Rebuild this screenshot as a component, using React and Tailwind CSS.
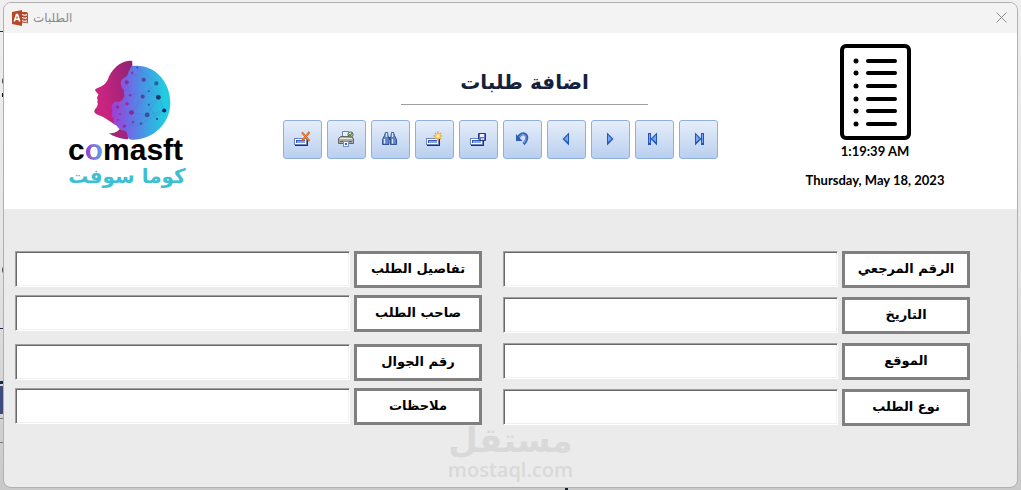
import * as React from "react";

const arabic = "font-['DejaVu_Sans',sans-serif]";

const leftFields = [
  [
    { id: "details", label: "تفاصيل الطلب" },
    { id: "owner", label: "صاحب الطلب" },
  ],
  [
    { id: "mobile", label: "رقم الجوال" },
    { id: "notes", label: "ملاحظات" },
  ],
];

const rightFields = [
  { id: "reference", label: "الرقم المرجعي" },
  { id: "date", label: "التاريخ" },
  { id: "location", label: "الموقع" },
  { id: "type", label: "نوع الطلب" },
];

function Icon({ children }) {
  return (
    <svg viewBox="0 0 16 16" className="size-4" aria-hidden="true">
      {children}
    </svg>
  );
}

function RecordBox() {
  return (
    <g shapeRendering="crispEdges">
      <rect x="1" y="8" width="13" height="7" fill="#26324f" />
      <rect x="0" y="7" width="13" height="7" fill="#6f83b4" />
      <rect x="1" y="8" width="11" height="5" fill="#fff" />
      <rect x="2" y="9" width="9" height="3" fill="#2f57b5" />
      <rect x="3" y="10" width="8" height="2" fill="#7fa6ee" />
    </g>
  );
}

function Triangle({ dir, x }) {
  const left = dir == "left";
  return (
    <>
      <path
        d={left ? `M${x + 6} 1.5v13L${x - 0.5} 8z` : `M${x} 1.5v13L${x + 6.5} 8z`}
        fill="#2356b8"
      />
      <path
        d={left ? `M${x + 5} 4v7L${x + 1.2} 8z` : `M${x + 1} 4v7L${x + 4.8} 8z`}
        fill="#74a4f2"
      />
    </>
  );
}

const tools = [
  {
    name: "حذف",
    icon: (
      <>
        <RecordBox />
        <path d="M8 1.5l7.5 8.5M15.5 1L8 10" stroke="#c95f1c" strokeWidth="2" />
        <path d="M8 1.5l7 8M15 1.5L9 8.5" stroke="#f59a4a" strokeWidth="1" />
      </>
    ),
  },
  {
    name: "طباعة",
    icon: (
      <>
        <path d="M4.5 6V.5h6l2 2V6z" fill="#eaf1ff" stroke="#6583b5" />
        <path d="M2.500 5.5h11l2 2v5H.5v-5z" fill="#a9a9a9" stroke="#666" />
        <path d="M2 7.500h12" stroke="#ececec" />
        <path d="M2 10.5h12" stroke="#666" />
        <rect x="5.5" y="10.5" width="5" height="5" fill="#f4f8ff" stroke="#788fba" />
        <rect x="7" y="12" width="2" height="2" fill="#2f66c8" />
        <circle cx="12.5" cy="3.5" r="2.600" fill="#d7ecc8" stroke="#4c5b40" />
        <path d="M11 3.5l1.3 1.3L14.2 2" fill="none" stroke="#2a8a22" strokeWidth="1.2" />
      </>
    ),
  },
  {
    name: "بحث",
    icon: (
      <>
        <path d="M6 6h3v3H6z" fill="#2d4f8f" />
        <path
          d="M3.500 1.500h2l.5 3 1 3v6H.5V8.500l2-4zM9.500 1.500h2l1 3 2 4v5H8.500v-6l.5-3z"
          fill="#5f86cb"
          stroke="#34558f"
        />
        <path
          d="M2.500 8v4.500M10.500 8v4.500M4.500 2V6M10.500 2V6"
          stroke="#dfeaff"
          strokeWidth="1.300"
        />
      </>
    ),
  },
  {
    name: "سجل جديد",
    icon: (
      <>
        <RecordBox />
        <path
          d="M12 .5v9M7.500 5h9M9 2l6 6M15 2L9 8"
          stroke="#ee9a2c"
          strokeWidth="1.400"
        />
        <circle cx="12" cy="5" r="2.600" fill="#ffd465" />
        <circle cx="12" cy="5" r="1.300" fill="#fff7cf" />
      </>
    ),
  },
  {
    name: "حفظ",
    icon: (
      <>
        <RecordBox />
        <path d="M8.500 2.500h7v7H10L8.500 8z" fill="#5a74cf" stroke="#26387f" />
        <rect x="10" y="3" width="4" height="3" fill="#eef3ff" />
        <rect x="11" y="7" width="3" height="2" fill="#c5cce4" />
      </>
    ),
  },
  {
    name: "تراجع",
    icon: (
      <>
        <path
          d="M4 7C6 3 9 2 11 3.200C14 5 13 10 9.500 13"
          fill="none"
          stroke="#3862b5"
          strokeWidth="3"
        />
        <path
          d="M5 6.500C7 3.500 9 2.800 10.700 4C12.500 5.500 12.200 9 10 12"
          fill="none"
          stroke="#8bb0ee"
        />
        <path d="M2 3v7h6.500z" fill="#2b5cb8" />
      </>
    ),
  },
  { name: "السابق", icon: <Triangle dir="left" x={5} /> },
  { name: "التالي", icon: <Triangle dir="right" x={5} /> },
  {
    name: "الأول",
    icon: (
      <>
        <rect x="2" y="2" width="3" height="12" fill="#2356b8" />
        <rect x="3" y="3" width="1" height="9" fill="#74a4f2" />
        <Triangle dir="left" x={5} />
      </>
    ),
  },
  {
    name: "الأخير",
    icon: (
      <>
        <Triangle dir="right" x={5} />
        <rect x="11" y="2" width="3" height="12" fill="#2356b8" />
        <rect x="12" y="3" width="1" height="9" fill="#74a4f2" />
      </>
    ),
  },
];

// x, y, radius of the network nodes on the head
const nodes = [
  [216, 57, 4, "#8b3d9c"],
  [200, 85, 6, "#8a2f94"],
  [231, 41, 3, "#4a4a9c"],
  [250, 77, 6, "#44479a"],
  [287, 88, 6, "#34589a"],
  [265, 111, 3, "#3c5aa0"],
  [210, 123, 4, "#9332a0"],
  [247, 127, 6, "#54439a"],
  [293, 129, 7, "#20366f"],
  [201, 148, 5, "#92309a"],
  [173, 158, 5, "#9a2496"],
  [265, 151, 3, "#3a4f9d"],
  [214, 174, 7, "#7d2f92"],
  [180, 178, 3, "#94309e"],
  [310, 168, 6, "#14237b"],
  [260, 181, 7, "#38539a"],
  [289, 193, 3, "#1b3f99"],
  [218, 202, 4, "#654aa4"],
  [242, 207, 4, "#3f5da8"],
  [193, 214, 5, "#8f2b98"],
  [174, 196, 3, "#94309e"],
];

function HeadLogo() {
  return (
    <svg
      viewBox="104 19 226 236"
      preserveAspectRatio="none"
      className="h-20 w-[77px]"
      aria-hidden="true"
    >
      <defs>
        <linearGradient id="brain" x1="0" x2="1" y1="0" y2="0">
          <stop offset="0" stopColor="#a23bd0" />
          <stop offset="0.3" stopColor="#6d6be6" />
          <stop offset="0.6" stopColor="#3f9fe4" />
          <stop offset="0.9" stopColor="#22cbdf" />
        </linearGradient>
        <linearGradient id="face" x1="0" x2="1" y1="0.6" y2="0.3">
          <stop offset="0.2" stopColor="#c9247f" />
          <stop offset="1" stopColor="#8a2374" />
        </linearGradient>
      </defs>
      <path
        d="M216 22C185 17 153 48 144 78C136 94 122 98 108 105C104 110 115 115 117 121C115 127 111 130 114 135C116 139 112 142 115 147C115 153 113 157 107 164C102 172 105 178 120 183C138 189 146 199 160 206L206 226L230 120L217 42z"
        fill="url(#face)"
      />
      <path
        d="M147 234C163 237 176 231 184 216L214 230L203 253C178 250 158 243 147 234z"
        fill="#a1257c"
      />
      <path
        d="M215 37C280 28 328 82 328 145C328 207 276 256 214 254C207 254 203 249 202 241C203 232 195 226 187 226C177 226 174 214 167 211C158 206 164 196 161 190C151 182 160 172 157 166C151 151 163 139 174 142C180 145 188 137 189 132C199 126 187 116 193 108C179 96 179 77 193 71C204 68 203 57 206 52C211 47 211 40 215 37z"
        fill="url(#brain)"
      />
      <path
        d="M216 57L250 77L293 129L310 168L260 181L214 174L247 127L287 88M200 85L210 123L265 111L293 129L265 151L289 193M231 41L287 88L293 129L260 181L218 202M173 158L201 148M193 214L242 207L310 168"
        fill="none"
        stroke="#3d64b4"
        strokeOpacity="0.45"
      />
      {nodes.map(([cx, cy, r, fill]) => (
        <circle key={`${cx}-${cy}`} cx={cx} cy={cy} r={r} fill={fill} />
      ))}
    </svg>
  );
}

function DocumentIcon() {
  return (
    <svg viewBox="0 0 71 96" className="h-24 w-[71px]" aria-hidden="true">
      <rect
        x="2"
        y="2"
        width="67"
        height="92"
        rx="4"
        fill="#fff"
        stroke="#000"
        strokeWidth="4"
      />
      {[17, 29, 42, 55, 67, 80].map((y) => (
        <g key={y}>
          <circle cx="16" cy={y} r="2.5" />
          <path
            d={`M28 ${y}h27`}
            stroke="#000"
            strokeWidth="4"
            strokeLinecap="round"
          />
        </g>
      ))}
    </svg>
  );
}

function AccessIcon() {
  return (
    <svg viewBox="0 0 16 16" className="size-4" aria-hidden="true">
      <path d="M8 2h6q2 0 2 2v8q0 2-2 2H8z" fill="#b7472a" />
      <path
        d="M10 4.500q3 1.500 5 0M10 7.500q3 1.500 5 0M10 10.500q3 1.500 5 0M10 13q3 1 5 0"
        fill="none"
        stroke="#fff"
        strokeWidth="1.200"
      />
      <path d="M0 2L10 0v16L0 14z" fill="#b7472a" />
      <path
        d="M2.300 11.500L4.500 4.500h1l2.200 7M3.300 9.200h3.400"
        fill="none"
        stroke="#fff"
        strokeWidth="1.600"
      />
    </svg>
  );
}

function Field({ id, label }) {
  return (
    <div className="flex gap-1">
      <input
        id={id}
        type="text"
        dir="rtl"
        className={`${arabic} h-9 min-w-0 flex-1 border border-t-[#a0a0a0] border-r-white border-b-white border-l-[#a0a0a0] bg-white px-2 text-[13px] shadow-[inset_1px_1px_0_#696969,inset_-1px_-1px_0_#f0f0f0] outline-none`}
      />
      <label
        htmlFor={id}
        dir="rtl"
        className={`${arabic} flex h-[37px] w-32 items-center justify-center border-3 border-[#808080] bg-white pb-[2px] text-[13px] font-bold text-black`}
      >
        {label}
      </label>
    </div>
  );
}

// edges of the form that stays open behind the dialog
function Backdrop() {
  return (
    <div
      aria-hidden="true"
      className="absolute inset-0 overflow-hidden bg-gradient-to-b from-[#efefef] via-[#e6e6e6] to-[#c9c9c9]"
    >
      <div className="absolute top-[31px] left-0 w-1 border-t border-dashed border-[#1b2a41]" />
      <div className="absolute top-[77px] left-[2px] h-2 w-2 rounded-full bg-[#444]" />
      <div className="absolute top-[93px] left-[2px] h-1 w-2 bg-black" />
      <div className="absolute top-[264px] left-[2px] h-3 w-3 rounded-full bg-[#444]" />
      <div className="absolute top-[328px] left-0 w-1 border-t border-dashed border-[#1b2a41]" />
      <div className="absolute top-[381px] left-0 h-[3px] w-1 bg-[#14284a]" />
      <div className="absolute top-[386px] left-0 h-7 w-1 bg-[#3c4a7c]" />
      <div className="absolute top-[418px] left-0 h-px w-1 bg-[#777]" />
      <div className="absolute top-[442px] left-0 h-px w-1 bg-[#777]" />
      <div className="absolute bottom-0 left-[565px] h-[3px] w-[3px] bg-[#14213d]" />
    </div>
  );
}

export default function App() {
  return (
    <div className="relative flex min-h-screen px-[3px] py-[2px]">
      <Backdrop />
      <div className="relative flex flex-1 flex-col overflow-hidden rounded-lg border border-[#b0b0b0] bg-[#ebebeb]">
        <div className="flex h-[30px] items-center justify-between bg-[#f3f3f3] pr-[6px] pl-2">
          <div className="flex items-center gap-[5px]">
            <AccessIcon />
            <span dir="rtl" className={`${arabic} text-xs text-[#8a8a8a]`}>
              الطلبات
            </span>
          </div>
          <button type="button" aria-label="إغلاق" className="p-1 pt-[2px]">
            <svg viewBox="0 0 11 11" className="size-[11px]" aria-hidden="true">
              <path d="M.5.5l10 10M10.500.5l-10 10" stroke="#8a8a8a" />
            </svg>
          </button>
        </div>

        <header className="flex h-44 justify-between bg-white pr-[71px] pl-[60px]">
          <div className="flex w-[133px] flex-col pt-[27px]">
            <div className="flex pl-[30px]">
              <HeadLogo />
            </div>
            <div className="pl-1 font-['Liberation_Sans',sans-serif] text-3xl leading-5 font-bold text-black">
              c
              <span className="bg-gradient-to-r from-[#9333c9] to-[#4aa5f0] bg-clip-text text-transparent">
                o
              </span>
              masft
            </div>
            <div
              dir="rtl"
              className={`${arabic} w-[126px] text-center text-xl leading-8 font-bold whitespace-nowrap text-[#3dbfd3]`}
            >
              كوما سوفت
            </div>
          </div>

          <div className="flex flex-col">
            <div className="flex flex-col items-center pt-8 pl-12">
              <h1
                dir="rtl"
                className={`${arabic} w-[247px] border-b border-[#a0a0a0] pb-[5px] text-center text-xl leading-[34px] font-bold text-[#14213d]`}
              >
                اضافة طلبات
              </h1>
            </div>
            <div className="flex gap-[5px] pt-[15px]">
              {tools.map((tool) => (
                <button
                  key={tool.name}
                  type="button"
                  aria-label={tool.name}
                  className="flex size-[39px] items-center justify-center rounded-[3px] border border-[#8fb0dc] bg-gradient-to-b from-[#e6eefa] to-[#b9cfef] pr-px pb-px"
                >
                  <Icon>{tool.icon}</Icon>
                </button>
              ))}
            </div>
          </div>

          <div className="flex w-[142px] flex-col items-center pt-[11px] font-[Lato,sans-serif] text-[13px] font-bold whitespace-nowrap text-black">
            <DocumentIcon />
            <time className="leading-[22px]">1:19:39 AM</time>
            <time className="pt-1 leading-7">Thursday, May 18, 2023</time>
          </div>
        </header>

        <form className="grid grid-cols-2 gap-x-[21px] pt-[42px] pr-[47px] pl-[11px]">
          <div className="flex flex-col gap-3">
            {leftFields.map((group, key) => (
              <div key={key} className="flex flex-col gap-[7px]">
                {group.map((field) => (
                  <Field key={field.id} {...field} />
                ))}
              </div>
            ))}
          </div>
          <div className="flex flex-col gap-[9px]">
            {rightFields.map((field) => (
              <Field key={field.id} {...field} />
            ))}
          </div>
        </form>

        <div className="flex flex-col items-center gap-1 text-[#d9d9d9]">
          <div dir="rtl" className={`${arabic} text-[34px] leading-7 font-bold`}>
            مستقل
          </div>
          <div className="font-['Open_Sans',sans-serif] text-xl leading-6 font-semibold">
            mostaql.com
          </div>
        </div>
      </div>
    </div>
  );
}
